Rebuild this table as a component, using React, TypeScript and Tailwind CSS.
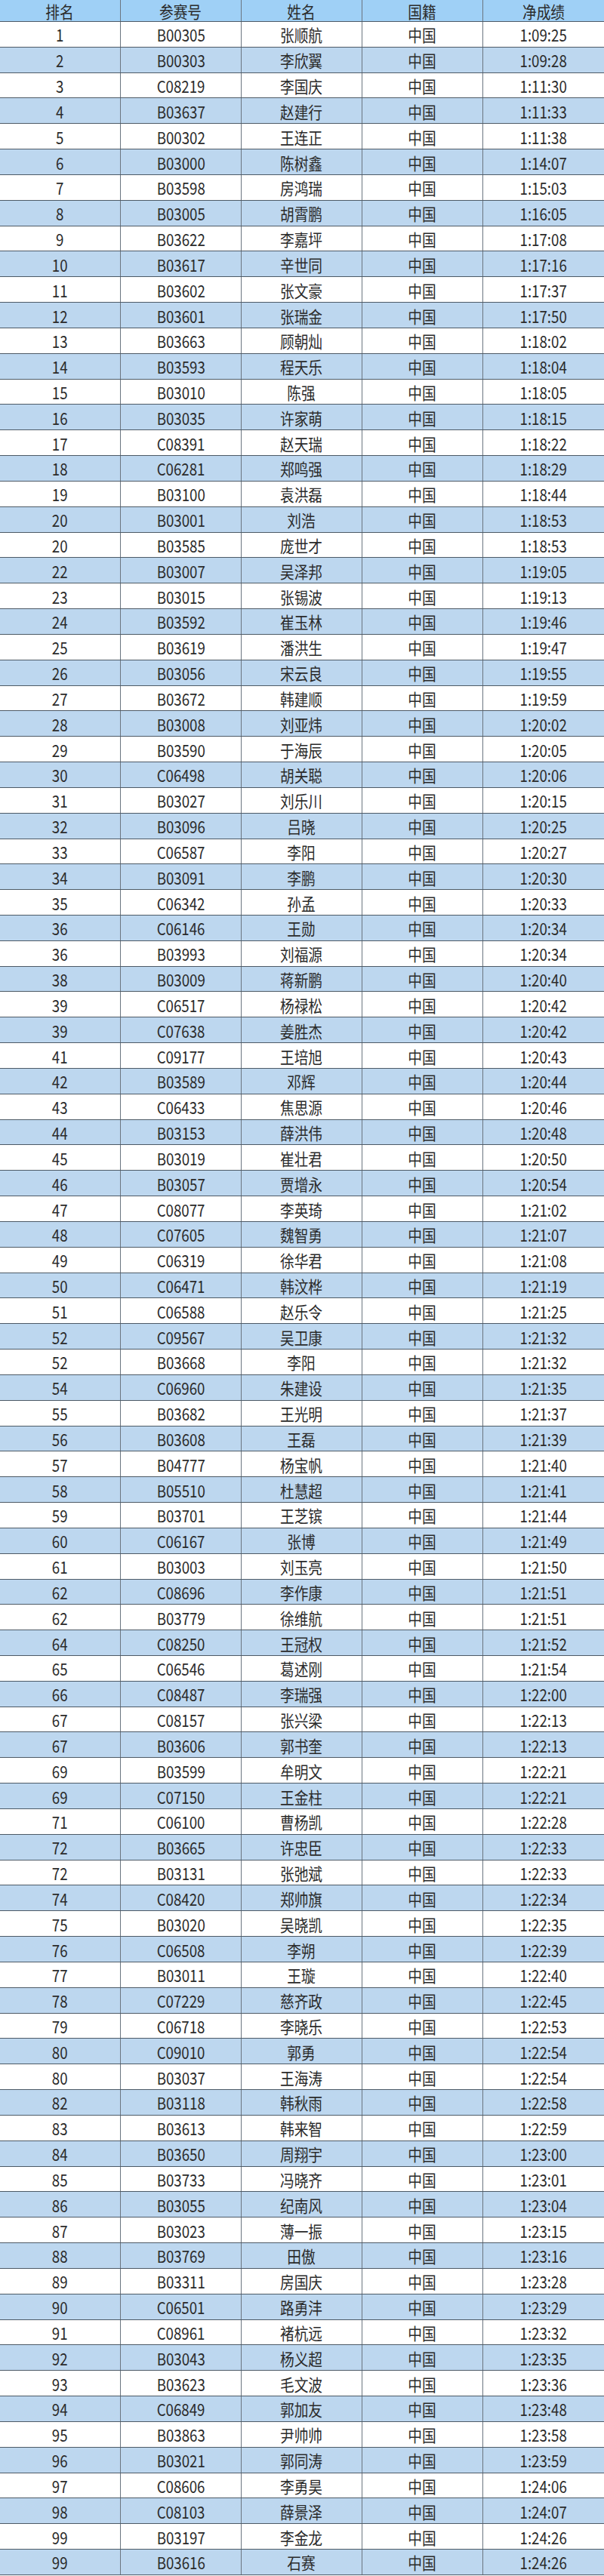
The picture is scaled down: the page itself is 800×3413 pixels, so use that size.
const rows: [string, string, string, string][] = [
  ['1', 'B00305', '张顺航', '1:09:25'],
  ['2', 'B00303', '李欣翼', '1:09:28'],
  ['3', 'C08219', '李国庆', '1:11:30'],
  ['4', 'B03637', '赵建行', '1:11:33'],
  ['5', 'B00302', '王连正', '1:11:38'],
  ['6', 'B03000', '陈树鑫', '1:14:07'],
  ['7', 'B03598', '房鸿瑞', '1:15:03'],
  ['8', 'B03005', '胡霄鹏', '1:16:05'],
  ['9', 'B03622', '李嘉坪', '1:17:08'],
  ['10', 'B03617', '辛世同', '1:17:16'],
  ['11', 'B03602', '张文豪', '1:17:37'],
  ['12', 'B03601', '张瑞金', '1:17:50'],
  ['13', 'B03663', '顾朝灿', '1:18:02'],
  ['14', 'B03593', '程天乐', '1:18:04'],
  ['15', 'B03010', '陈强', '1:18:05'],
  ['16', 'B03035', '许家萌', '1:18:15'],
  ['17', 'C08391', '赵天瑞', '1:18:22'],
  ['18', 'C06281', '郑鸣强', '1:18:29'],
  ['19', 'B03100', '袁洪磊', '1:18:44'],
  ['20', 'B03001', '刘浩', '1:18:53'],
  ['20', 'B03585', '庞世才', '1:18:53'],
  ['22', 'B03007', '吴泽邦', '1:19:05'],
  ['23', 'B03015', '张锡波', '1:19:13'],
  ['24', 'B03592', '崔玉林', '1:19:46'],
  ['25', 'B03619', '潘洪生', '1:19:47'],
  ['26', 'B03056', '宋云良', '1:19:55'],
  ['27', 'B03672', '韩建顺', '1:19:59'],
  ['28', 'B03008', '刘亚炜', '1:20:02'],
  ['29', 'B03590', '于海辰', '1:20:05'],
  ['30', 'C06498', '胡关聪', '1:20:06'],
  ['31', 'B03027', '刘乐川', '1:20:15'],
  ['32', 'B03096', '吕晓', '1:20:25'],
  ['33', 'C06587', '李阳', '1:20:27'],
  ['34', 'B03091', '李鹏', '1:20:30'],
  ['35', 'C06342', '孙孟', '1:20:33'],
  ['36', 'C06146', '王勋', '1:20:34'],
  ['36', 'B03993', '刘福源', '1:20:34'],
  ['38', 'B03009', '蒋新鹏', '1:20:40'],
  ['39', 'C06517', '杨禄松', '1:20:42'],
  ['39', 'C07638', '姜胜杰', '1:20:42'],
  ['41', 'C09177', '王培旭', '1:20:43'],
  ['42', 'B03589', '邓辉', '1:20:44'],
  ['43', 'C06433', '焦思源', '1:20:46'],
  ['44', 'B03153', '薛洪伟', '1:20:48'],
  ['45', 'B03019', '崔壮君', '1:20:50'],
  ['46', 'B03057', '贾增永', '1:20:54'],
  ['47', 'C08077', '李英琦', '1:21:02'],
  ['48', 'C07605', '魏智勇', '1:21:07'],
  ['49', 'C06319', '徐华君', '1:21:08'],
  ['50', 'C06471', '韩汶桦', '1:21:19'],
  ['51', 'C06588', '赵乐令', '1:21:25'],
  ['52', 'C09567', '吴卫康', '1:21:32'],
  ['52', 'B03668', '李阳', '1:21:32'],
  ['54', 'C06960', '朱建设', '1:21:35'],
  ['55', 'B03682', '王光明', '1:21:37'],
  ['56', 'B03608', '王磊', '1:21:39'],
  ['57', 'B04777', '杨宝帆', '1:21:40'],
  ['58', 'B05510', '杜慧超', '1:21:41'],
  ['59', 'B03701', '王芝镔', '1:21:44'],
  ['60', 'C06167', '张博', '1:21:49'],
  ['61', 'B03003', '刘玉亮', '1:21:50'],
  ['62', 'C08696', '李作康', '1:21:51'],
  ['62', 'B03779', '徐维航', '1:21:51'],
  ['64', 'C08250', '王冠权', '1:21:52'],
  ['65', 'C06546', '葛述刚', '1:21:54'],
  ['66', 'C08487', '李瑞强', '1:22:00'],
  ['67', 'C08157', '张兴梁', '1:22:13'],
  ['67', 'B03606', '郭书奎', '1:22:13'],
  ['69', 'B03599', '牟明文', '1:22:21'],
  ['69', 'C07150', '王金柱', '1:22:21'],
  ['71', 'C06100', '曹杨凯', '1:22:28'],
  ['72', 'B03665', '许忠臣', '1:22:33'],
  ['72', 'B03131', '张弛斌', '1:22:33'],
  ['74', 'C08420', '郑帅旗', '1:22:34'],
  ['75', 'B03020', '吴晓凯', '1:22:35'],
  ['76', 'C06508', '李朔', '1:22:39'],
  ['77', 'B03011', '王璇', '1:22:40'],
  ['78', 'C07229', '慈齐政', '1:22:45'],
  ['79', 'C06718', '李晓乐', '1:22:53'],
  ['80', 'C09010', '郭勇', '1:22:54'],
  ['80', 'B03037', '王海涛', '1:22:54'],
  ['82', 'B03118', '韩秋雨', '1:22:58'],
  ['83', 'B03613', '韩来智', '1:22:59'],
  ['84', 'B03650', '周翔宇', '1:23:00'],
  ['85', 'B03733', '冯晓齐', '1:23:01'],
  ['86', 'B03055', '纪南风', '1:23:04'],
  ['87', 'B03023', '薄一振', '1:23:15'],
  ['88', 'B03769', '田傲', '1:23:16'],
  ['89', 'B03311', '房国庆', '1:23:28'],
  ['90', 'C06501', '路勇沣', '1:23:29'],
  ['91', 'C08961', '褚杭远', '1:23:32'],
  ['92', 'B03043', '杨义超', '1:23:35'],
  ['93', 'B03623', '毛文波', '1:23:36'],
  ['94', 'C06849', '郭加友', '1:23:48'],
  ['95', 'B03863', '尹帅帅', '1:23:58'],
  ['96', 'B03021', '郭同涛', '1:23:59'],
  ['97', 'C08606', '李勇昊', '1:24:06'],
  ['98', 'C08103', '薛景泽', '1:24:07'],
  ['99', 'B03197', '李金龙', '1:24:26'],
  ['99', 'B03616', '石赛', '1:24:26'],
];

const headers = ['排名', '参赛号', '姓名', '国籍', '净成绩'];

export default function App() {
  return (
    <div className="w-[800px] h-[3413px] bg-white text-[#2b2b2b] text-[22px] leading-none [font-family:'Noto_Sans_CJK_SC',sans-serif]">
      {/* 表头 */}
      <div className="grid grid-cols-5 h-[29px] bg-[#9fd0f6] border-b border-[#4d5a66]">
        {headers.map((h, i) => (
          <div
            key={h}
            className={`flex items-center justify-center ${i < 4 ? 'border-r border-[#6b7580]' : ''}`}
          >
            <span className="scale-x-[0.85] inline-block">{h}</span>
          </div>
        ))}
      </div>

      {/* 成绩 */}
      {rows.map((r, idx) => (
        <div
          key={idx}
          className={`grid grid-cols-5 h-[33.84px] border-b border-[#4d5a66] ${idx % 2 === 1 ? 'bg-[#bdd7ef]' : 'bg-white'}`}
        >
          {[r[0], r[1], r[2], '中国', r[3]].map((c, i) => (
            <div
              key={i}
              className={`flex items-center justify-center ${i < 4 ? 'border-r border-[#6b7580]' : ''}`}
            >
              <span className="scale-x-[0.85] inline-block">{c}</span>
            </div>
          ))}
        </div>
      ))}
    </div>
  );
}
